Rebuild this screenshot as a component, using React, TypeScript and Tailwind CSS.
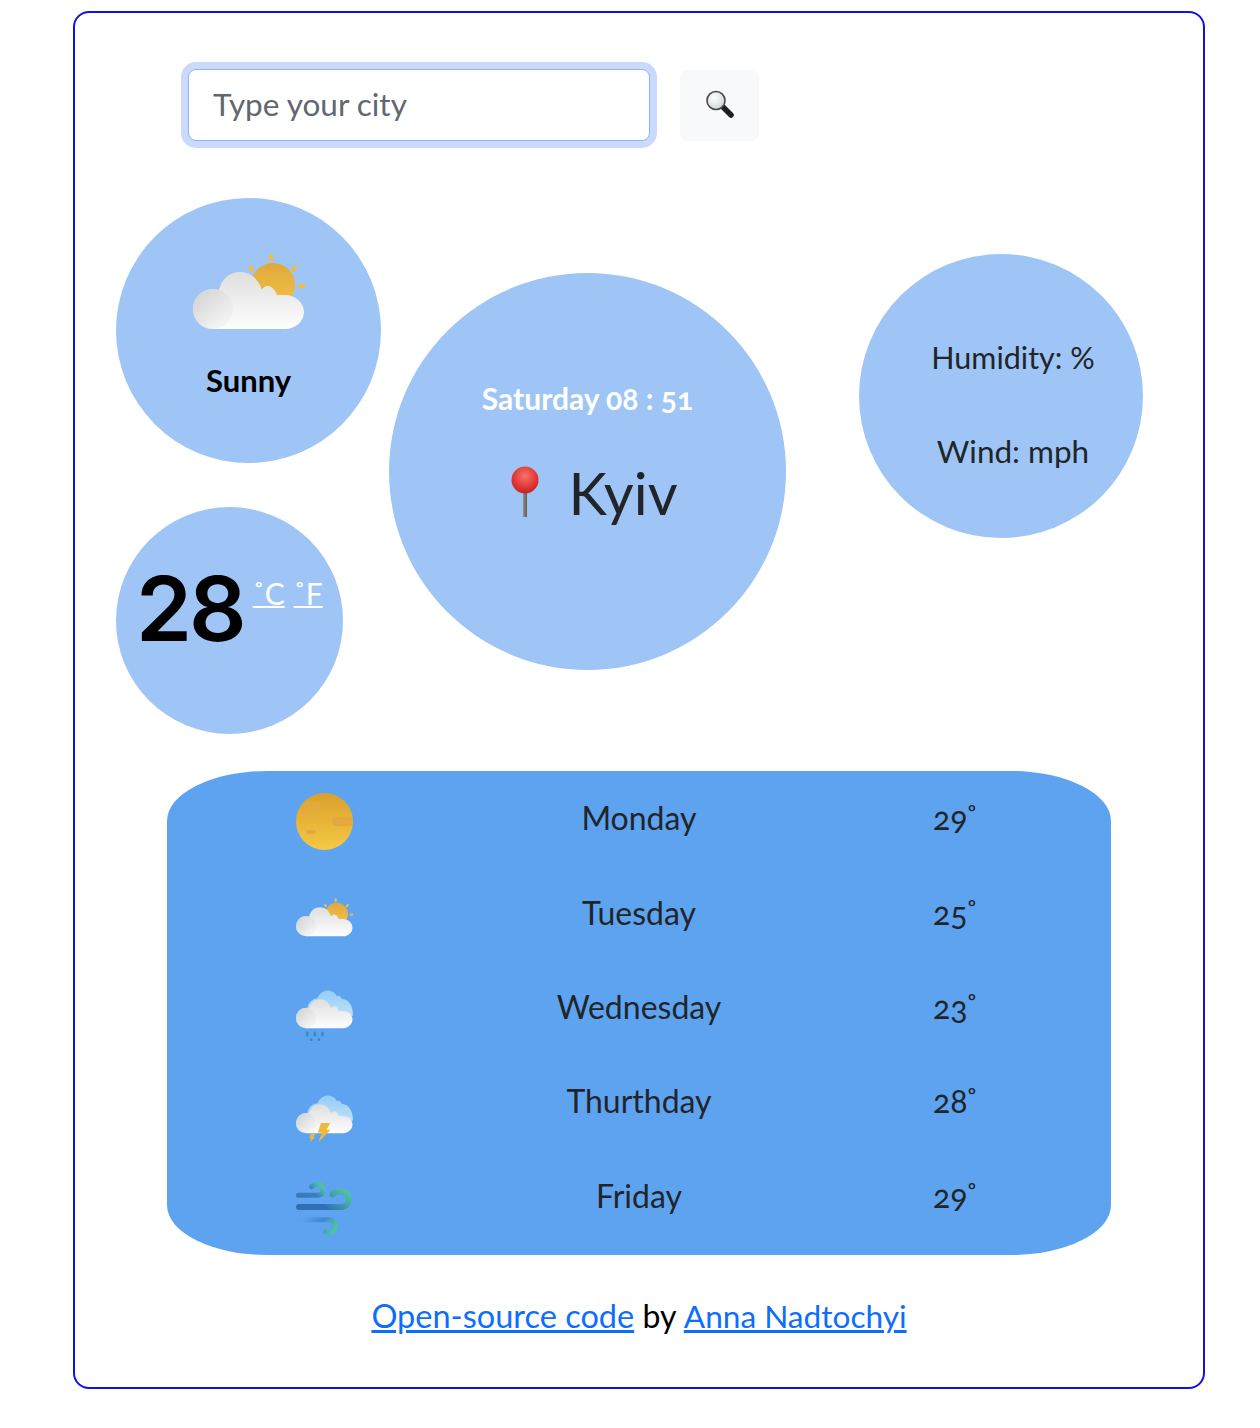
const forecast = [
  { day: "Monday", temp: "29", icon: "sun" },
  { day: "Tuesday", temp: "25", icon: "partly" },
  { day: "Wednesday", temp: "23", icon: "rain" },
  { day: "Thurthday", temp: "28", icon: "storm" },
  { day: "Friday", temp: "29", icon: "wind" },
];

// the white cloud shared by all the weather icons, drawn in a 112 wide box
const Cloud = ({ id }: { id: string }) => (
  <>
    <defs>
      <linearGradient id={`${id}-body`} x1="0" y1="18" x2="0" y2="76" gradientUnits="userSpaceOnUse">
        <stop offset="0" stopColor="#dedede" />
        <stop offset="1" stopColor="#ffffff" />
      </linearGradient>
      <linearGradient id={`${id}-left`} x1="2" y1="38" x2="42" y2="66" gradientUnits="userSpaceOnUse">
        <stop offset="0" stopColor="#d2d2d2" />
        <stop offset="1" stopColor="#e8e8e8" stopOpacity="0.2" />
      </linearGradient>
    </defs>
    <path
      d="M20 75 A20 20 0 0 1 20 35 Q23 35 26 36 C29 24 37 18 47 18 C57 18 65 24 69 36 C72 30 80 30 84 41 H92 C103 41 111 49 111 58 C111 67 103 75 92 75 Z"
      fill={`url(#${id}-body)`}
    />
    <circle cx="20" cy="55" r="20" fill={`url(#${id}-left)`} />
  </>
);

const SunIcon = () => (
  <svg viewBox="0 0 57 57" className="w-[57px] h-[57px] mt-[22px]">
    <defs>
      <linearGradient id="moon" x1="0" y1="0" x2="0" y2="1">
        <stop offset="0" stopColor="#d9a02c" />
        <stop offset="1" stopColor="#f5c945" />
      </linearGradient>
    </defs>
    <circle cx="28.5" cy="28.5" r="28.5" fill="url(#moon)" />
    <rect x="7" y="9" width="18" height="9" rx="4.5" fill="#e3aa3e" />
    <rect x="36" y="24" width="21" height="9" rx="4.5" fill="#e5a840" />
    <rect x="10" y="37" width="10" height="4" rx="2" fill="#e6a73f" />
  </svg>
);

const SunCloud = ({ id, className }: { id: string; className: string }) => (
  <svg viewBox="0 0 112 78" className={className}>
    <defs>
      <linearGradient id={`${id}-sun`} x1="0" y1="8" x2="0" y2="56" gradientUnits="userSpaceOnUse">
        <stop offset="0" stopColor="#e0a83c" />
        <stop offset="1" stopColor="#f2c548" />
      </linearGradient>
    </defs>
    <circle cx="80" cy="31" r="22" fill={`url(#${id}-sun)`} />
    <g stroke="#ecbd4a" strokeWidth="4" strokeLinecap="round">
      <path d="M78 2 V6" />
      <path d="M57 13 L59 16" />
      <path d="M102 13 L100 16" />
      <path d="M107 32 H111" />
    </g>
    <Cloud id={id} />
  </svg>
);

const BackCloud = ({ id }: { id: string }) => (
  <>
    <defs>
      <linearGradient id={`${id}-back`} x1="0" y1="0" x2="0" y2="60" gradientUnits="userSpaceOnUse">
        <stop offset="0" stopColor="#92cdf6" />
        <stop offset="1" stopColor="#c6e4f8" />
      </linearGradient>
    </defs>
    <path
      d="M22 40 C22 24 34 16 42 16 C46 6 56 0 64 1 C72 2 78 6 80 12 C84 10 88 12 90 17 C102 18 112 28 112 50 L60 60 Z"
      fill={`url(#${id}-back)`}
    />
  </>
);

const RainIcon = () => (
  <svg viewBox="0 0 112 100" className="w-[57px] h-[51px] mt-[30px]">
    <BackCloud id="rain" />
    <Cloud id="rain" />
    <g stroke="#3f86c4" strokeWidth="5" strokeLinecap="round">
      <path d="M22 84 V89" />
      <path d="M37 84 V89" />
      <path d="M52 84 V89" />
      <path d="M30 97 V98" />
      <path d="M45 97 V98" />
    </g>
  </svg>
);

const StormIcon = () => (
  <svg viewBox="0 0 112 92" className="w-[57px] h-[47px] mt-[41px]">
    <BackCloud id="storm" />
    <Cloud id="storm" />
    <path d="M49 55 H67 L60 68 H68 L44 92 L51 74 H43 Z" fill="#efb93c" />
    <path d="M29 76 H38 L34 83 H38 L27 92 L30 85 H26 Z" fill="#efb93c" />
  </svg>
);

const WindIcon = () => (
  <svg viewBox="0 0 112 106" className="w-[57px] h-[54px] mt-[33px]" fill="none">
    <defs>
      <linearGradient id="w1" x1="10" y1="30" x2="40" y2="0" gradientUnits="userSpaceOnUse">
        <stop offset="0" stopColor="#3a79ba" />
        <stop offset="0.6" stopColor="#3a7fbd" />
        <stop offset="1" stopColor="#4fc0a4" />
      </linearGradient>
      <linearGradient id="w2" x1="60" y1="52" x2="90" y2="14" gradientUnits="userSpaceOnUse">
        <stop offset="0" stopColor="#2f6fb5" />
        <stop offset="1" stopColor="#4fc0a4" />
      </linearGradient>
      <linearGradient id="w3" x1="20" y1="70" x2="70" y2="102" gradientUnits="userSpaceOnUse">
        <stop offset="0" stopColor="#5aa2ee" />
        <stop offset="0.5" stopColor="#3f86d6" />
        <stop offset="1" stopColor="#4cc4a0" />
      </linearGradient>
    </defs>
    <path d="M5 26 H42 C58 26 58 5 42 5 C38 5 34 6 31 9" stroke="url(#w1)" strokeWidth="10" strokeLinecap="round" />
    <path d="M6 49 H88 C110 49 110 18 86 18 C80 18 75 20 72 24" stroke="url(#w2)" strokeWidth="12" strokeLinecap="round" />
    <path d="M5 74 H66 C82 74 82 99 64 99 C62 99 60 99 58 98" stroke="url(#w3)" strokeWidth="10" strokeLinecap="round" />
  </svg>
);

const ForecastIcon = ({ icon }: { icon: string }) => {
  if (icon === "sun") return <SunIcon />;
  if (icon === "partly") return <SunCloud id="partly" className="w-[57px] h-[40px] mt-[33px]" />;
  if (icon === "rain") return <RainIcon />;
  if (icon === "storm") return <StormIcon />;
  return <WindIcon />;
};

const Magnifier = () => (
  <svg viewBox="0 0 30 30" className="w-[30px] h-[30px]">
    <defs>
      <radialGradient id="lens" cx="0.4" cy="0.35" r="0.7">
        <stop offset="0" stopColor="#ffffff" />
        <stop offset="1" stopColor="#c9d4da" />
      </radialGradient>
    </defs>
    <path d="M18 17 L26 25" stroke="#1f1f1f" strokeWidth="5.5" strokeLinecap="round" />
    <circle cx="11" cy="10.5" r="9" fill="url(#lens)" stroke="#4a4a4a" strokeWidth="1.6" />
  </svg>
);

const Pin = () => (
  <svg viewBox="0 0 28 52" className="w-[28px] h-[52px]">
    <defs>
      <radialGradient id="pin" cx="0.5" cy="0.35" r="0.65">
        <stop offset="0" stopColor="#f4736e" />
        <stop offset="0.7" stopColor="#e2332e" />
        <stop offset="1" stopColor="#b52a28" />
      </radialGradient>
      <linearGradient id="stem" x1="0" y1="0" x2="1" y2="0">
        <stop offset="0" stopColor="#9c8f80" />
        <stop offset="1" stopColor="#5f5a55" />
      </linearGradient>
    </defs>
    <rect x="12" y="24" width="4" height="27" fill="url(#stem)" />
    <circle cx="14" cy="14" r="13.5" fill="url(#pin)" />
  </svg>
);

export default function App() {
  return (
    <div className="bg-white text-[#212529] font-['Lato','Noto_Sans',sans-serif]">
      <div className="ml-[73px] mt-[11px] mb-[39px] w-[1132px] h-[1378px] border-2 border-[#1010e8] rounded-2xl pt-[56px] pl-[41px]">
        <form className="flex items-center ml-[71px]">
          <input
            type="text"
            placeholder="Type your city"
            className="w-[462px] h-[72px] ml-[1px] pl-6 pr-6 pb-[2px] bg-white border border-[#86b7fe] rounded-lg text-[31.5px] text-[#212529] placeholder:text-[#5f6770] shadow-[0_0_0_7px_#cbdafc] outline-none"
          />
          <button type="button" className="w-[79px] h-[71px] ml-[30px] flex items-center justify-center bg-[#f8f9fa] rounded-lg">
            <Magnifier />
          </button>
        </form>

        <div className="flex mt-[57px]">
          <div className="w-[273px] flex flex-col gap-[44px]">
            <div className="w-[265px] h-[265px] rounded-full bg-[#9ec5f5] flex flex-col items-center pt-[56px]">
              <SunCloud id="today" className="w-[112px] h-[78px]" />
              <p className="mt-[30px] text-[31px] leading-[36px] font-bold text-black">Sunny</p>
            </div>
            <div className="w-[227px] h-[227px] rounded-full bg-[#9ec5f5] flex items-start pl-[20px] pt-[47px]">
              <span className="text-[90px] leading-[110px] font-semibold text-black font-['Inter',sans-serif] tracking-[-3px]">28</span>
              <span className="ml-[9px] mt-[17px] text-[30px] leading-[44px] text-white flex gap-[9px]">
                <a href="#" className="underline decoration-2">˚C</a>
                <a href="#" className="underline decoration-2">˚F</a>
              </span>
            </div>
          </div>

          <div className="w-[397px] h-[397px] mt-[75px] rounded-full bg-[#9ec5f5] flex flex-col items-center pt-[106px]">
            <p className="text-[30px] leading-[38px] font-bold text-white [font-variant-numeric:oldstyle-nums]">Saturday 08 : 51</p>
            <div className="flex items-center mt-[38px] ml-[14px]">
              <Pin />
              <span className="ml-[29px] mt-[3px] text-[58px] leading-[70px]">Kyiv</span>
            </div>
          </div>

          <div className="w-[284px] h-[284px] mt-[56px] ml-[73px] rounded-full bg-[#9ec5f5] flex flex-col items-center pl-[24px] pt-[84px] gap-[55px] leading-[39px]">
            <p className="text-[30.5px]">Humidity: %</p>
            <p className="text-[31.5px]">Wind: mph</p>
          </div>
        </div>

        <div className="w-[944px] h-[484px] mt-[37px] ml-[51px] bg-[#5ea3f0] rounded-[100px/50px] grid grid-cols-3 auto-rows-[94.4px] text-[32px] text-center">
          {forecast.map((row) => (
            <div key={row.day} className="contents">
              <div className="flex justify-center items-start">
                <ForecastIcon icon={row.icon} />
              </div>
              <div className="flex items-center justify-center">{row.day}</div>
              <div className="flex items-center justify-center [font-variant-numeric:oldstyle-nums]">
                {row.temp}
                <span className="-ml-[2px] -mr-[4px]">˚</span>
              </div>
            </div>
          ))}
        </div>

        <p className="mt-[42px] ml-[-41px] text-center text-[32px] leading-[38px] text-black">
          <a href="#" className="text-[32.5px] text-[#0d6efd] underline">Open-source code</a> by{" "}
          <a href="#" className="text-[31.6px] text-[#0d6efd] underline">Anna Nadtochyi</a>
        </p>
      </div>
    </div>
  );
}
